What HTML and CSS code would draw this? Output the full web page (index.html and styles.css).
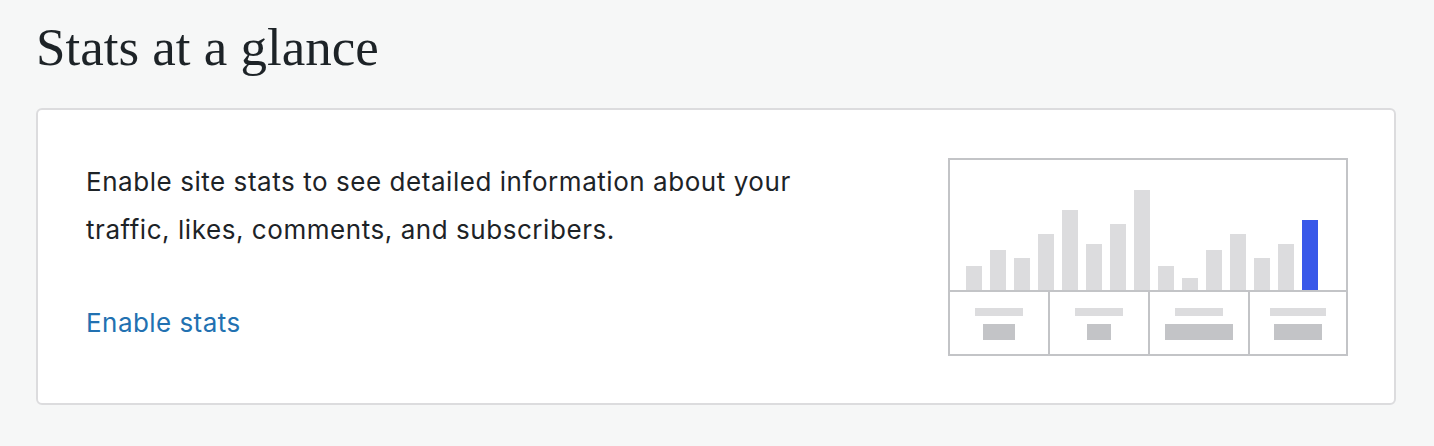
FILE: index.html
```html
<!DOCTYPE html>
<html lang="en">
<head>
<meta charset="utf-8">
<title>Stats at a glance</title>
<link rel="stylesheet" href="styles.css">
</head>
<body>
<main class="page">
  <h1 class="title">Stats at a glance</h1>
  <section class="card">
    <div class="intro">
      <p class="intro-text">Enable site stats to see detailed information about your traffic, likes, comments, and subscribers.</p>
      <a class="intro-link" href="#">Enable stats</a>
    </div>
    <div class="chart" aria-hidden="true">
      <div class="bars">
        <span class="bar" style="height:24px"></span>
        <span class="bar" style="height:40px"></span>
        <span class="bar" style="height:32px"></span>
        <span class="bar" style="height:56px"></span>
        <span class="bar" style="height:80px"></span>
        <span class="bar" style="height:46px"></span>
        <span class="bar" style="height:66px"></span>
        <span class="bar" style="height:100px"></span>
        <span class="bar" style="height:24px"></span>
        <span class="bar" style="height:12px"></span>
        <span class="bar" style="height:40px"></span>
        <span class="bar" style="height:56px"></span>
        <span class="bar" style="height:32px"></span>
        <span class="bar" style="height:46px"></span>
        <span class="bar bar-active" style="height:70px"></span>
      </div>
      <div class="cells">
        <div class="cell"><span class="cell-label" style="width:48px"></span><span class="cell-value" style="width:32px"></span></div>
        <div class="cell"><span class="cell-label" style="width:48px"></span><span class="cell-value" style="width:24px"></span></div>
        <div class="cell"><span class="cell-label" style="width:48px"></span><span class="cell-value" style="width:68px"></span></div>
        <div class="cell"><span class="cell-label" style="width:56px"></span><span class="cell-value" style="width:48px"></span></div>
      </div>
    </div>
  </section>
</main>
</body>
</html>
```

FILE: styles.css
```css
html, body {
  margin: 0;
  padding: 0;
  background: #f6f7f7;
}

.page {
  padding: 21px 38px 0 36px;
  display: flex;
  flex-direction: column;
}

.title {
  margin: 0 0 34px 0;
  font-family: "Liberation Serif", "DejaVu Serif", serif;
  font-weight: 400;
  font-size: 53px;
  line-height: 53px;
  color: #1d2327;
}

.card {
  background: #ffffff;
  border: 2px solid #dcdcde;
  border-radius: 6px;
  padding: 48px 46px 47px 48px;
  display: flex;
  justify-content: space-between;
  align-items: flex-start;
}

.intro {
  display: flex;
  flex-direction: column;
  align-items: flex-start;
  max-width: 740px;
}

.intro-text {
  margin: 0;
  font-family: Inter, "Noto Sans", sans-serif;
  font-size: 26px;
  line-height: 48px;
  letter-spacing: 0.55px;
  color: #1d2327;
}

.intro-link {
  margin-top: 45px;
  font-family: Inter, "Noto Sans", sans-serif;
  font-size: 26px;
  line-height: 48px;
  letter-spacing: 0.45px;
  color: #2271b1;
  text-decoration: none;
}

.chart {
  width: 396px;
  height: 194px;
  border: 2px solid #c3c4c7;
  display: flex;
  flex-direction: column;
  flex-shrink: 0;
}

.bars {
  height: 130px;
  display: flex;
  align-items: flex-end;
  gap: 8px;
  padding-left: 16px;
  border-bottom: 2px solid #c3c4c7;
}

.bar {
  display: block;
  width: 16px;
  background: #dcdcde;
}

.bar-active {
  background: #3858e9;
}

.cells {
  flex: 1;
  display: grid;
  grid-template-columns: 98px 100px 100px 1fr;
}

.cell {
  display: flex;
  flex-direction: column;
  align-items: center;
  gap: 8px;
  padding-top: 16px;
}

.cell + .cell {
  border-left: 2px solid #c3c4c7;
}

.cell-label {
  display: block;
  height: 8px;
  background: #dcdcde;
}

.cell-value {
  display: block;
  height: 16px;
  background: #c3c4c7;
}
```
